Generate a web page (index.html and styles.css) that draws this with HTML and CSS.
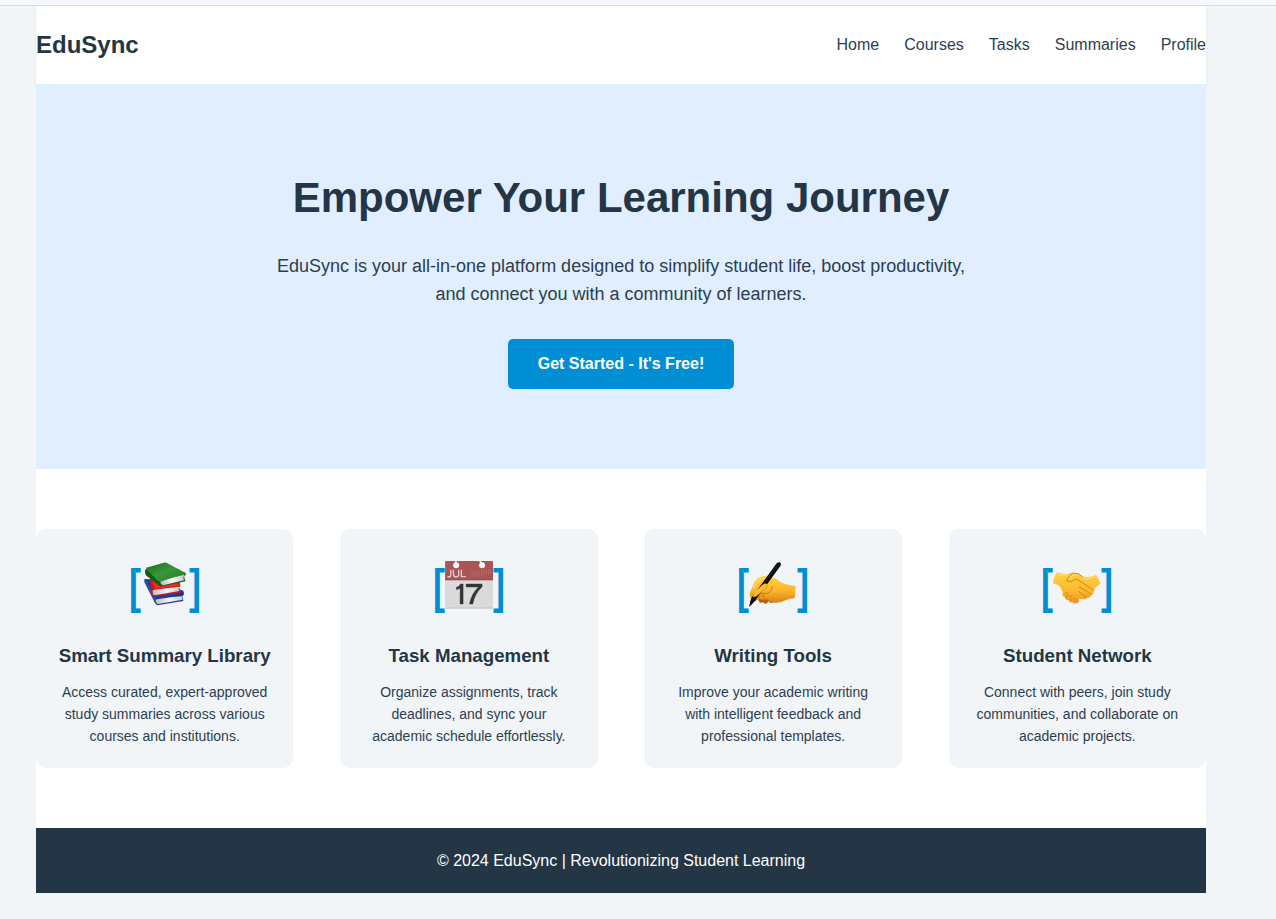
FILE: index.html
```html
<!DOCTYPE html>
<html lang="en">
<head>
<meta charset="utf-8">
<title>EduSync</title>
<link rel="stylesheet" href="styles.css">
</head>
<body>
<div class="topstrip"></div>
<div class="page">
  <header class="header">
    <div class="logo">EduSync</div>
    <nav class="nav"><a>Home</a><a>Courses</a><a>Tasks</a><a>Summaries</a><a>Profile</a></nav>
  </header>
  <section class="hero">
    <h1>Empower Your Learning Journey</h1>
    <p>EduSync is your all-in-one platform designed to simplify student life, boost productivity, and connect you with a community of learners.</p>
    <a class="cta">Get Started - It's Free!</a>
  </section>
  <section class="features">
    <article class="card">
      <div class="icon"><span class="open">[</span>
        <svg viewBox="62.5 34 142 142">
          <defs>
            <linearGradient id="green" x1="0" y1="0" x2="1" y2="1"><stop offset="0" stop-color="#1c6a1d"/><stop offset=".5" stop-color="#38983a"/><stop offset="1" stop-color="#207724"/></linearGradient>
            <linearGradient id="leaf" x1="0" y1="0" x2="1" y2="0"><stop offset="0" stop-color="#bcbcc2"/><stop offset=".5" stop-color="#f5f5f7"/><stop offset="1" stop-color="#c9c9cf"/></linearGradient>
          </defs>
          <path d="M73 87 Q70 94 77 105 L100 151 Q103 161 110 165 L188 152 L187 147 L184 138 L189 134 L188 122 L91 88Z" fill="#1c3f9f"/>
          <path d="M106 148 L185 136 Q182 142 186 149 L112 161 Q104 156 106 148Z" fill="url(#leaf)"/>
          <path d="M76 91 L103 148" stroke="#2d5bc6" stroke-width="3" fill="none"/>
          <path d="M150 140 L189 126 L188 134 L184 138Z" fill="#173685"/>
          <path d="M93 82 Q87 91 90 102 L93 128 Q92 138 101 139 L180 127 L178 121 L175 112 L179 109 L176 86Z" fill="#cf1718"/>
          <path d="M94 89 L105 116 L174 107 L174 100 L124 104Z" fill="#ed2a23"/>
          <path d="M97 124 Q96 119 102 119 L175 110 Q172 116 176 123 L102 135 Q96 132 97 124Z" fill="url(#leaf)"/>
          <path d="M78 56 Q71 64 77 76 L110 103 Q117 110 126 109 L194 94 L192 88 L190 79 L196 73 L191 67Z" fill="#155d1c"/>
          <path d="M120 95 Q150 84 190 75 Q186 84 190 91 L128 106 Q119 103 120 95Z" fill="url(#leaf)"/>
          <path d="M78 54 L130 39 Q135 37 139 40 L196 70 L120 92 Q115 93 111 90Z" fill="url(#green)"/>
          <path d="M79 56 L112 90 Q115 94 122 92 L195 71" fill="none" stroke="#4caa48" stroke-width="2"/>
        </svg><span class="close">]</span></div>
      <h3>Smart Summary Library</h3>
      <p>Access curated, expert-approved study summaries across various courses and institutions.</p>
    </article>
    <article class="card">
      <div class="icon"><span class="open">[</span>
        <svg viewBox="62.7 33 144 144">
          <path d="M63 87H207V172Q207 176 203 176H67Q63 176 63 172Z" fill="#dadada"/>
          <path d="M64 174H206" stroke="#c4c4c4" stroke-width="3"/>
          <path d="M63 37Q63 33 67 33H203Q207 33 207 37V91H63Z" fill="#a95456"/>
          <path d="M63 89H207" stroke="#964b4d" stroke-width="2"/>
          <g fill="#f8f8f8"><circle cx="96" cy="46" r="9"/><circle cx="174" cy="46" r="9"/><path d="M93 33h5v11h-5zM165 33h5l6 10-5 3z"/></g>
          <path d="M80 59V75Q80 81 74 81L70 79M88 59V73Q88 81 96 81T104 73V59M112 59V80H125" fill="none" stroke="#e9d0d0" stroke-width="3.8"/>
          <path d="M144 64v17M151 63v17M158 62v18M165 61v18M172 60v19M179 59v18M186 58v18M193 58v17M199 57v14" stroke="#bd7476" stroke-width="2"/>
          <path d="M97 112Q107 110 109 102H117V162H108V114Q104 118 97 119ZM126 102H174V110Q151 132 146 162H136Q142 132 163 111H126Z" fill="#343434" stroke="#343434" stroke-width="1.2"/>
        </svg><span class="close">]</span></div>
      <h3>Task Management</h3>
      <p>Organize assignments, track deadlines, and sync your academic schedule effortlessly.</p>
    </article>
    <article class="card">
      <div class="icon"><span class="open">[</span>
        <svg viewBox="63.3 33 144 144">
          <defs><linearGradient id="hand" x1="0" y1="0" x2="0" y2="1"><stop offset="0" stop-color="#ffd148"/><stop offset=".55" stop-color="#fbb62b"/><stop offset="1" stop-color="#d98318"/></linearGradient></defs>
          <path d="M91 141 Q90 152 96 158 Q102 160 105 155 Q108 162 114 161 Q120 160 121 154 Q126 161 134 158 L139 150Z" fill="#b85f12"/>
          <path d="M67 141 Q63 129 70 119 L79 98 Q84 87 95 82 L108 78 Q121 77 126 84 L138 83 Q150 88 158 97 Q177 106 202 107 Q204 126 200 145 Q185 145 173 151 Q158 160 140 158 Q127 158 121 150 L96 148 L78 154 Q70 151 67 141Z" fill="url(#hand)"/>
          <path d="M82 142 Q99 126 106 130 Q117 133 125 126 Q133 119 133 110 M106 133 Q103 147 121 149 M96 138Q91 146 98 149" fill="none" stroke="#ca7818" stroke-width="3"/>
          <path d="M78 116 Q85 93 102 86 L119 85" fill="none" stroke="#ffdc67" stroke-width="4"/>
          <path d="M64 170 L70 145 L145 41 Q149 35 156 37 Q161 41 158 47 L83 150 Z" fill="#111"/>
          <path d="M100 111 L148 46" stroke="#35322f" stroke-width="2"/>
          <path d="M75 141 Q77 130 87 120 L104 104 Q115 97 118 104 Q118 111 110 118 L91 134 Q82 143 75 141Z" fill="#fbbc34"/>
          <path d="M82 139 Q92 134 110 119 Q118 112 118 104" fill="none" stroke="#d88a1d" stroke-width="2.5"/>
          <path d="M64 170 L70 144 L84 150Z" fill="#111"/>
        </svg><span class="close">]</span></div>
      <h3>Writing Tools</h3>
      <p>Improve your academic writing with intelligent feedback and professional templates.</p>
    </article>
    <article class="card">
      <div class="icon"><span class="open">[</span>
        <svg viewBox="63.9 33 144 144">
          <defs><linearGradient id="shake" x1="0" y1="0" x2="0" y2="1"><stop offset="0" stop-color="#ffce45"/><stop offset=".6" stop-color="#fcb92e"/><stop offset="1" stop-color="#ec9b20"/></linearGradient></defs>
          <path d="M77 67 Q92 74 108 72 Q116 66 127 68 L151 79 Q173 84 193 75 Q201 86 206 101 Q195 107 188 117 Q188 130 180 134 Q176 145 166 143 Q160 151 151 147 L143 146 Q143 158 135 160 Q128 162 124 157 Q113 160 111 150 Q101 152 100 142 Q91 140 93 130 Q90 113 79 105 L64 99 Q66 80 77 67Z" fill="url(#shake)"/>
          <path d="M105 92 Q113 73 127 69 Q138 68 151 79 M105 91 Q108 98 119 94 Q127 91 131 87 Q139 88 149 96 L185 120 M143 111 L180 133 M140 124 L166 142" fill="none" stroke="#cf831b" stroke-width="3" stroke-linecap="round"/>
          <path d="M96 134 Q101 125 107 128 Q111 132 103 141 M104 144 Q112 132 118 137 Q121 142 113 150 M116 154 Q122 141 129 144 Q132 149 125 156 M130 157 L136 149" fill="none" stroke="#cf831b" stroke-width="2" stroke-linecap="round"/>
          <path d="M79 73 Q93 79 105 76 M156 85 Q176 88 190 81 M112 87 Q119 75 130 73" fill="none" stroke="#ffdc68" stroke-width="4" stroke-linecap="round"/>
        </svg><span class="close">]</span></div>
      <h3>Student Network</h3>
      <p>Connect with peers, join study communities, and collaborate on academic projects.</p>
    </article>
  </section>
  <footer class="footer">© 2024 EduSync | Revolutionizing Student Learning</footer>
</div>
</body>
</html>
```
FILE: styles.css
```css
* { box-sizing: border-box; margin: 0; padding: 0; }
body { background: #f1f5f8; color: #243546; font-family: "Liberation Sans", Arial, sans-serif; font-size: 16px; line-height: 1.6; height: 919px; overflow: hidden; }
.topstrip { height: 5.9px; background: #f5f8ff; border-bottom: 1px solid #d8dce8; }
.page { width: 1170px; margin-left: 36px; background: #fff; }
.header { display: flex; justify-content: space-between; align-items: center; padding: 20px 0; background: #fff; box-shadow: 0 2px 4px rgba(0,0,0,.05); clip-path: inset(0 -8px -8px -8px); }
.logo { font-size: 24px; font-weight: bold; }
.nav { display: flex; gap: 25px; }
.nav a { color: #2c3e50; }
.hero { position: relative; padding: 80px 0; background: #e0eeff; text-align: center; }
.hero h1 { font-size: 42px; margin-bottom: 20.6px; }
.hero p { width: 700px; margin: 0 auto 30.6px; font-size: 18px; line-height: 28.2px; color: #2c3e50; }
.cta { display: block; width: fit-content; margin: 0 auto; padding: 12px 30px; border-radius: 5px; background: #008fd5; color: #fff; font-weight: bold; }
.features { display: flex; justify-content: space-between; padding: 60px 0; }
.card { width: 22%; padding: 20px; border-radius: 10px; background: #f1f5f8; text-align: center; }
.icon { display: flex; justify-content: center; height: 76.8px; margin-bottom: 15.7px; color: #008fd5; font-size: 48px; font-weight: bold; line-height: 75.6px; }
.icon svg { width: 48px; height: 48px; margin-top: 11.9px; }
.open { transform: scaleX(.75); transform-origin: right; }
.close { transform: scaleX(.75); transform-origin: left; }
.card h3 { font-size: 18.72px; margin: 0 -10px 10px; }
.card p { font-size: 14px; line-height: 22px; padding-bottom: .5px; color: #2c3e50; }
.footer { padding: 20px 20px 19.4px; background: #243546; color: #fff; text-align: center; }
```
